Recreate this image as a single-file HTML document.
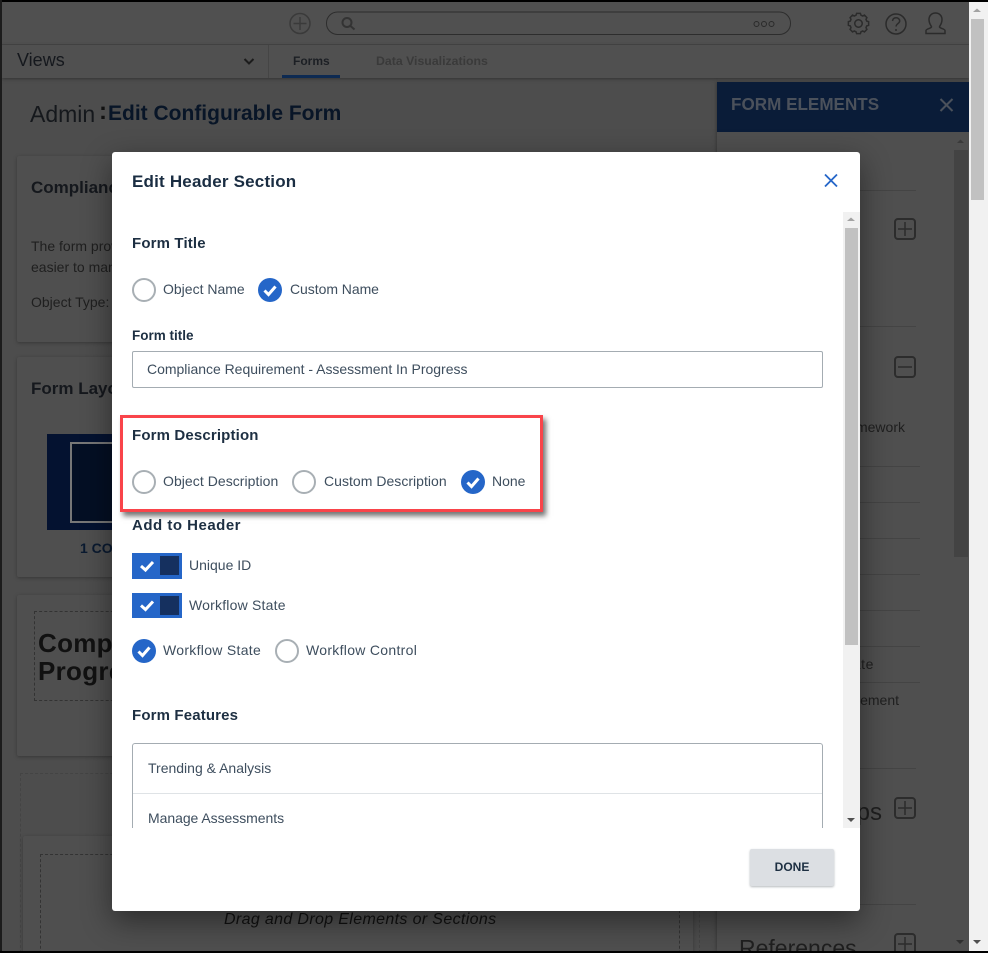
<!DOCTYPE html>
<html><head><meta charset="utf-8"><style>
html,body{margin:0;padding:0;background:#000}
#p{position:relative;width:988px;height:953px;overflow:hidden;background:#4d4d4d;font-family:"Liberation Sans",sans-serif}
#p div{position:absolute;box-sizing:border-box}
.t{white-space:nowrap;line-height:20px;height:20px}
.h{font-weight:bold;font-size:15px;color:#1d2f42;letter-spacing:.15px}
.l{font-size:14px;color:#3e4e5e}
.d{color:#15181d}
.r{width:24px;height:24px;border-radius:50%;border:2px solid #a8afb4;background:#fff}
.c{width:24px;height:24px;border-radius:50%;background:#2566c8}
.c svg,.tg svg{position:absolute}
.card{background:#4f4f4f;box-shadow:0 1px 3px #383838;border-radius:2px}
.ln{height:1px;background:#444}
.ic{width:22px;height:22px;border:2px solid #2c2c2c;border-radius:4px}
.tg{left:132px;width:50px;background:#2566c8}
.kn{left:28px;top:3px;width:19px;height:19px;background:#15305f}
svg{position:absolute;overflow:visible}
</style></head><body><div id="p">
<!-- frame -->
<div style="left:2px;top:2px;width:967px;height:42px;background:#505050"></div>
<div style="left:2px;top:44px;width:967px;height:1px;background:#454545"></div>
<div style="left:2px;top:45px;width:967px;height:33px;background:#505050;box-shadow:0 1px 3px #333"></div>
<div style="left:268px;top:45px;width:1px;height:33px;background:#454545"></div>
<svg style="left:0;top:0" width="988" height="80" fill="none" stroke="#333">
<circle cx="300" cy="23.500" r="10" stroke="#3a3a3a" stroke-width="1.500"/><path d="M300 17v13M293.500 23.500h13" stroke="#3a3a3a" stroke-width="1.500"/>
<rect x="326.500" y="12" width="464" height="22.500" rx="11" stroke="#2d2d2d"/>
<circle cx="347" cy="22.500" r="4.500" stroke="#333" stroke-width="2"/><path d="M350.500 26l4 3.500" stroke="#333" stroke-width="2"/>
<circle cx="756.500" cy="24" r="2.500" stroke="#2a2a2a"/><circle cx="764" cy="24" r="2.500" stroke="#2a2a2a"/><circle cx="771.500" cy="24" r="2.500" stroke="#2a2a2a"/>
<g transform="translate(858.500,23.500) scale(.75) translate(-858.500,-27)" stroke="#2b2b2b" stroke-width="2">
<path d="M856 13.500h5l.8 2.500 2.300 1 2.300-1.200 3.300 3.400-1.200 2.300 1 2.300 2.500.8v4.800l-2.500.8-1 2.300 1.200 2.300-3.300 3.400-2.300-1.200-2.300 1-.8 2.500h-5l-.8-2.500-2.300-1-2.300 1.200-3.300-3.400 1.200-2.300-1-2.300-2.500-.8v-4.800l2.500-.8 1-2.300-1.200-2.300 3.300-3.400 2.300 1.200 2.300-1z"/>
<circle cx="858.500" cy="27" r="5"/></g>
<circle cx="896" cy="24" r="10" stroke="#2b2b2b" stroke-width="1.500"/><path d="M892.500 21c.3-2.200 1.800-3.200 3.600-3.200 2 0 3.600 1.300 3.600 3.100 0 2.700-3.600 2.700-3.600 5.600" stroke="#2b2b2b" stroke-width="1.500"/><circle cx="896" cy="30" r="1" fill="#2b2b2b" stroke="none"/>
<path d="M926 33.500v-3c0-1.500 5-2.200 5.500-3.500.2-.8-2.500-3-2.500-7.500 0-3.800 2.800-6.500 6.500-6.500s6.500 2.700 6.500 6.500c0 4.500-2.700 6.700-2.500 7.500.5 1.300 5.500 2 5.500 3.500v3z" stroke="#2b2b2b" stroke-width="1.500"/>
<path d="M244.500 59l4.500 4.500 4.500-4.500" stroke="#1c1c1c" stroke-width="2"/>
</svg>
<div class="t d" style="left:17px;top:50px;font-size:18px">Views</div>
<div class="t" style="left:293px;top:51px;font-size:12px;font-weight:bold;color:#1c1f24">Forms</div>
<div class="t" style="left:376px;top:51px;font-size:12.300px;font-weight:bold;color:#3a3a3a">Data Visualizations</div>
<div style="left:282px;top:75px;width:58px;height:3px;background:#0d2a52"></div>
<div class="t" style="left:30px;top:101px;font-size:23px;line-height:26px;height:26px;color:#15181c">Admin</div>
<div class="t" style="left:99px;top:99px;font-size:24px;font-weight:bold;line-height:26px;height:26px;color:#111">:</div>
<div class="t" style="left:108px;top:101px;font-size:21px;font-weight:bold;line-height:26px;height:26px;color:#081527">Edit Configurable Form</div>
<!-- cards -->
<div class="card" style="left:17px;top:156px;width:100px;height:186px"></div>
<div class="t d" style="left:31px;top:178px;font-size:17px;font-weight:bold">Compliance</div>
<div class="t d" style="left:31px;top:236px;font-size:14px;color:#1f1f1f">The form provides</div>
<div class="t d" style="left:31px;top:257px;font-size:14px;color:#1f1f1f">easier to manage</div>
<div class="t d" style="left:31px;top:292px;font-size:14px;color:#1f1f1f">Object Type:</div>
<div class="card" style="left:17px;top:357px;width:100px;height:220px"></div>
<div class="t d" style="left:31px;top:379px;font-size:17px;font-weight:bold">Form Layout</div>
<div style="left:47px;top:434px;width:70px;height:96px;background:#041230"></div>
<div style="left:70px;top:442px;width:50px;height:81px;border:2px solid #777;background:#040f24"></div>
<div class="t" style="left:80px;top:538px;font-size:14px;font-weight:bold;color:#0a1a30">1 COLUMN</div>
<div class="card" style="left:17px;top:595px;width:100px;height:161px"></div>
<div style="left:34px;top:611px;width:90px;height:90px;border:1px dashed #333"></div>
<div class="t" style="left:38px;top:629px;font-size:26px;font-weight:bold;line-height:28px;height:56px;color:#111;letter-spacing:.3px">Compliance<br>Progress</div>
<div style="left:20px;top:773px;width:680px;height:180px;border:1px dashed #444"></div>
<div class="card" style="left:23px;top:836px;width:670px;height:120px"></div>
<div style="left:40px;top:854px;width:640px;height:110px;border:1px dashed #333"></div>
<div class="t" style="left:224px;top:910px;font-size:16px;font-style:italic;color:#111;letter-spacing:.35px">Drag and Drop Elements or Sections</div>
<!-- panel -->
<div style="left:717px;top:82px;width:252px;height:869px;background:#4f4f4f;box-shadow:-1px 0 3px #3a3a3a"></div>
<div style="left:717px;top:82px;width:252px;height:50px;background:#0a1c38"></div>
<div class="t" style="left:731px;top:95px;font-size:17.100px;font-weight:bold;color:#4b515b">FORM ELEMENTS</div>
<svg style="left:0;top:0" width="988" height="130" fill="none"><path d="M940.500 99l12 12M952.500 99l-12 12" stroke="#4b515b" stroke-width="2"/></svg>
<div style="left:954px;top:150px;width:14px;height:407px;background:#434343"></div>
<div class="ln" style="left:740px;top:190px;width:176px"></div>
<div class="ln" style="left:740px;top:326px;width:176px"></div>
<div class="ln" style="left:740px;top:466px;width:180px"></div>
<div class="ln" style="left:740px;top:502px;width:180px"></div>
<div class="ln" style="left:740px;top:538px;width:180px"></div>
<div class="ln" style="left:740px;top:574px;width:180px"></div>
<div class="ln" style="left:740px;top:610px;width:180px"></div>
<div class="ln" style="left:740px;top:646px;width:180px"></div>
<div class="ln" style="left:740px;top:682px;width:180px"></div>
<div class="ln" style="left:740px;top:768px;width:176px"></div>
<div class="ln" style="left:740px;top:904px;width:176px"></div>
<div class="ic" style="left:894px;top:218px"></div>
<div class="ic" style="left:894px;top:356px"></div>
<div class="ic" style="left:894px;top:797px"></div>
<div class="ic" style="left:894px;top:933px"></div>
<svg style="left:0;top:0" width="988" height="953" fill="none" stroke="#2c2c2c" stroke-width="1.500"><path d="M905 222v14M898 229h14M898 367h14M905 801v14M898 808h14M905 937v14M898 944h14"/>
<path d="M957 143l3.500-3.500 3.500 3.500z" fill="#3a3a3a" stroke="none"/><path d="M956 940h8l-4 4z" fill="#2f2f2f" stroke="none"/></svg>
<div class="t d" style="left:760px;top:417px;font-size:14px;color:#1f1f1f;width:145px;text-align:right">Risk Framework</div>
<div class="t d" style="left:760px;top:654px;font-size:14px;color:#1f1f1f;width:114px;text-align:right;letter-spacing:.6px">Template</div>
<div class="t d" style="left:760px;top:690px;font-size:14px;color:#1f1f1f;width:139px;text-align:right">Requirement</div>
<div class="t d" style="left:780px;top:803px;font-size:24px;width:102px;text-align:right;color:#1f1f1f">Groups</div>
<div class="t d" style="left:739px;top:936px;font-size:23px;line-height:24px;color:#1f1f1f">References</div>
<!-- page scrollbar -->
<div style="left:969px;top:2px;width:19px;height:949px;background:#f1f1f1"></div>
<div style="left:971px;top:19px;width:13px;height:181px;background:#c1c1c1"></div>
<svg style="left:0;top:0" width="988" height="953"><path d="M973 12l4-3.500 4 3.500z" fill="#a3a3a3"/><path d="M973 940h8l-4 4z" fill="#505050"/></svg>
<!-- black frame -->
<div style="left:0;top:0;width:988px;height:2px;background:#000"></div>
<div style="left:0;top:0;width:2px;height:953px;background:#1c1c1c"></div>
<div style="left:0;top:951px;width:988px;height:2px;background:#000"></div>
<!-- modal -->
<div style="left:112px;top:152px;width:748px;height:759px;background:#fff;border-radius:3px;box-shadow:0 10px 30px rgba(0,0,0,.45)"></div>
<div class="t" style="left:132px;top:172px;font-size:17px;font-weight:bold;color:#1a2d42;letter-spacing:.2px">Edit Header Section</div>
<svg style="left:0;top:0" width="988" height="953" fill="none"><path d="M825 174.500l12 12M837 174.500l-12 12" stroke="#2566c8" stroke-width="1.800"/></svg>
<div style="left:843px;top:212px;width:17px;height:616px;background:#f1f1f1"></div>
<div style="left:845px;top:228px;width:13px;height:417px;background:#c1c1c1"></div>
<svg style="left:0;top:0" width="988" height="953"><path d="M847 221l4-3.500 4 3.500z" fill="#a3a3a3"/><path d="M847 818h8l-4 4z" fill="#505050"/></svg>
<div class="t h" style="left:132px;top:234px">Form Title</div>
<div class="r" style="left:132px;top:278px"></div>
<div class="t l" style="left:163px;top:279px">Object Name</div>
<div class="c" style="left:258px;top:278px"><svg width="24" height="24" fill="none"><path d="M6.500 12.500l4 4 7-8" stroke="#fff" stroke-width="3"/></svg></div>
<div class="t l" style="left:290px;top:279px;letter-spacing:-.05px">Custom Name</div>
<div class="t" style="left:132px;top:326px;font-size:13.500px;font-weight:bold;color:#1d2f42">Form title</div>
<div style="left:132px;top:351px;width:691px;height:37px;border:1px solid #a4acb2;border-radius:2px;background:#fff"></div>
<div class="t l" style="left:147px;top:359px;letter-spacing:-.02px">Compliance Requirement - Assessment In Progress</div>
<!-- red box -->
<div style="left:120px;top:415px;width:423px;height:97px;border:3.500px solid #f9444a;background:#fff;box-shadow:3px 4px 5px rgba(0,0,0,.55)"></div>
<div class="t h" style="left:132px;top:426px">Form Description</div>
<div class="r" style="left:132px;top:470px"></div>
<div class="t l" style="left:163px;top:471px;letter-spacing:.05px">Object Description</div>
<div class="r" style="left:292px;top:470px"></div>
<div class="t l" style="left:324px;top:471px;letter-spacing:.03px">Custom Description</div>
<div class="c" style="left:461px;top:470px"><svg width="24" height="24" fill="none"><path d="M6.500 12.500l4 4 7-8" stroke="#fff" stroke-width="3"/></svg></div>
<div class="t l" style="left:492px;top:471px">None</div>
<div class="t h" style="left:132px;top:516px;letter-spacing:.5px">Add to Header</div>
<div class="tg" style="top:553px;height:26px"><div class="kn"></div><svg width="50" height="26" fill="none"><path d="M9 13l4.500 4 7.500-8" stroke="#fff" stroke-width="3"/></svg></div>
<div class="t l" style="left:189px;top:555px">Unique ID</div>
<div class="tg" style="top:593px;height:25px"><div class="kn"></div><svg width="50" height="25" fill="none"><path d="M9 12.500l4.500 4 7.500-8" stroke="#fff" stroke-width="3"/></svg></div>
<div class="t l" style="left:189px;top:595px;letter-spacing:.2px">Workflow State</div>
<div class="c" style="left:132px;top:639px"><svg width="24" height="24" fill="none"><path d="M6.500 12.500l4 4 7-8" stroke="#fff" stroke-width="3"/></svg></div>
<div class="t l" style="left:163px;top:640px;letter-spacing:.3px">Workflow State</div>
<div class="r" style="left:275px;top:639px"></div>
<div class="t l" style="left:306px;top:640px;letter-spacing:.3px">Workflow Control</div>
<div class="t h" style="left:132px;top:706px">Form Features</div>
<div style="left:132px;top:743px;width:691px;height:85px;border:1px solid #a4acb2;border-bottom:0;border-radius:3px 3px 0 0;background:#fff"></div>
<div style="left:133px;top:793px;width:689px;height:1px;background:#dfe3e6"></div>
<div class="t l" style="left:148px;top:758px">Trending &amp; Analysis</div>
<div class="t l" style="left:148px;top:808px;height:20px;overflow:hidden;letter-spacing:-.05px">Manage Assessments</div>
<div style="left:750px;top:849px;width:84px;height:37px;background:#dcdfe3;border-radius:2px;box-shadow:0 1px 2px #b5b9bd"></div>
<div class="t" style="left:750px;top:857px;width:84px;text-align:center;font-size:12px;font-weight:bold;color:#1d2f42">DONE</div>
</div></body></html>
